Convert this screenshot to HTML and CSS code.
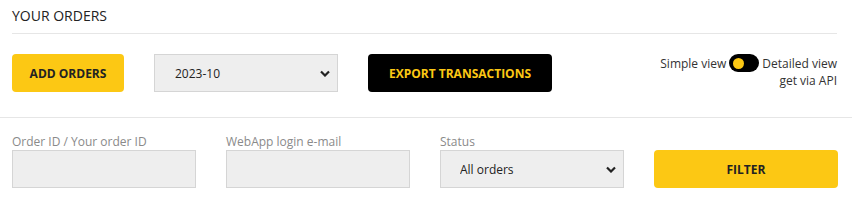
FILE: index.html
```html
<!DOCTYPE html>
<html>
<head>
<meta charset="utf-8">
<link rel="stylesheet" href="styles.css">
</head>
<body>
<div class="top">
  <h1 class="title">YOUR ORDERS</h1>
  <div class="actions">
    <button class="btn btn-yellow btn-add">ADD ORDERS</button>
    <select class="sel"><option>2023-10</option></select>
    <button class="btn btn-black">EXPORT TRANSACTIONS</button>
    <div class="views">
      <div class="view-line">
        <span>Simple view</span>
        <span class="toggle"><span class="knob"></span></span>
        <span>Detailed view</span>
      </div>
      <div class="view-line">get via API</div>
    </div>
  </div>
</div>
<div class="filters">
  <div class="field">
    <label class="lbl">Order ID / Your order ID</label>
    <input class="inp" type="text">
  </div>
  <div class="field">
    <label class="lbl">WebApp login e-mail</label>
    <input class="inp" type="text">
  </div>
  <div class="field">
    <label class="lbl">Status</label>
    <select class="sel sel-status"><option>All orders</option></select>
  </div>
  <div class="field">
    <button class="btn btn-yellow btn-filter">FILTER</button>
  </div>
</div>
</body>
</html>
```
FILE: styles.css
```css
* { box-sizing: border-box; }
body {
  margin: 0;
  font-family: "Open Sans", "Noto Sans", sans-serif;
  color: #222;
  background: #fff;
}
.top {
  padding: 0 15px 0 12px;
  border-bottom: 1px solid #e6e6e6;
}
.title {
  margin: 0;
  font-size: 14px;
  font-weight: 400;
  line-height: 19px;
  padding: 6px 0 8px;
  border-bottom: 1px solid #e6e6e6;
}
.actions {
  display: flex;
  align-items: flex-start;
  gap: 30px;
  padding: 20px 0 25px;
}
.btn {
  font-family: "Open Sans", "Noto Sans", sans-serif;
  font-weight: 700;
  font-size: 12px;
  border: none;
  border-radius: 4px;
  height: 38px;
  cursor: pointer;
}
.btn-yellow { background: #fcc814; color: #222; }
.btn-black { background: #000; color: #fcc814; width: 184px; }
.btn-add { width: 112px; }
.sel {
  appearance: none;
  -webkit-appearance: none;
  width: 184px;
  height: 38px;
  background: #eee url("data:image/svg+xml;utf8,<svg xmlns='http://www.w3.org/2000/svg' width='10' height='7' viewBox='0 0 10 7'><path d='M1 1.5 L5 5.5 L9 1.5' fill='none' stroke='%23222' stroke-width='2.2'/></svg>") no-repeat right 7px center;
  border: 1px solid #d5d5d5;
  border-radius: 0;
  font-family: "Open Sans", "Noto Sans", sans-serif;
  font-size: 12px;
  color: #222;
  padding: 0 0 0 20px;
}
.views {
  margin-left: auto;
  font-size: 12px;
  line-height: 17px;
  text-align: right;
  color: #333;
  padding-top: 0;
}
.view-line {
  display: flex;
  align-items: center;
  justify-content: flex-end;
  gap: 3px;
}
.toggle {
  display: inline-flex;
  align-items: center;
  width: 30px;
  height: 18px;
  border-radius: 9px;
  background: #000;
  padding-left: 4px;
}
.knob {
  width: 11px;
  height: 11px;
  border-radius: 50%;
  background: #fcc814;
}
.filters {
  display: grid;
  grid-template-columns: repeat(4, 184px);
  column-gap: 30px;
  padding: 16px 0 0 12px;
}
.field {
  display: flex;
  flex-direction: column;
  justify-content: flex-end;
}
.lbl {
  font-size: 12px;
  line-height: 16px;
  color: #8a8a8a;
  margin-bottom: 0;
}
.inp {
  width: 184px;
  height: 38px;
  background: #eee;
  border: 1px solid #d5d5d5;
  border-radius: 0;
}
.sel-status { padding-left: 19px; }
.btn-filter { width: 184px; }
```
